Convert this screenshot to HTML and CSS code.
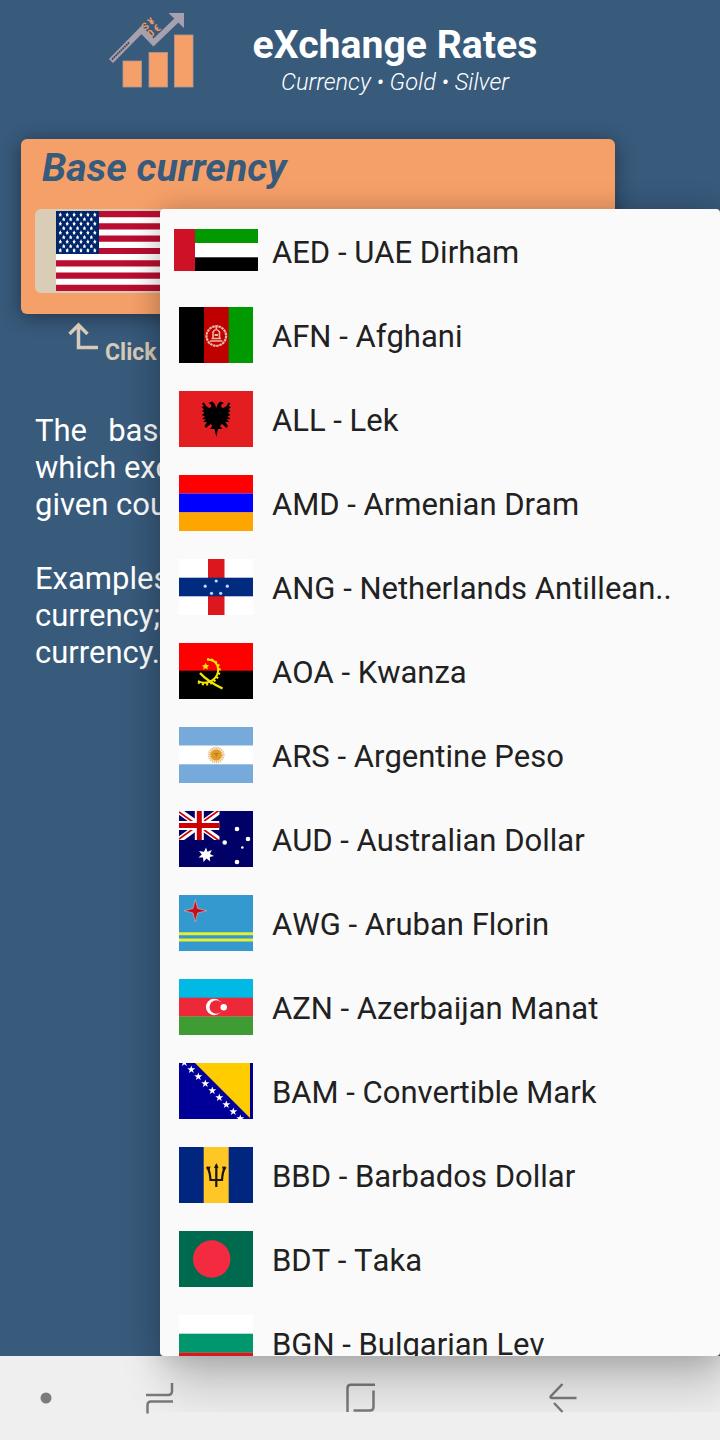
FILE: index.html
```
<!DOCTYPE html>
<html lang="en">
<head>
  <meta charset="UTF-8" />
  <meta name="viewport" content="width=device-width, initial-scale=1.0" />
  <title>eXchange Rates</title>
  <link rel="stylesheet" href="styles.css">
</head>
<body>

  <div class="app">
    <header class="header">
      <svg class="logo" viewBox="0 0 90 80">
        <g fill="#f6a069" stroke="#b49a91" stroke-width=".8">
          <rect x="15" y="51" width="18.5" height="26" />
          <rect x="41" y="42.5" width="18.5" height="34.5" />
          <rect x="66.5" y="25" width="18.5" height="52" />
        </g>
        <path d="M3 51 L33.5 20 L45.5 32.5 L71.5 7.5" fill="none" stroke="#a7a1af" stroke-width="5.8" />
        <path d="M60.5 3 H76 V18 Z" fill="#a7a1af" />
        <path d="M4 49.5 L21 32.5" stroke="#45404d" stroke-width="1.8" stroke-dasharray="1.8 .7" />
        <g class="logo-signs" transform="translate(40.5 18) rotate(-40)">
          <text x="-4.5" y="0">S</text>
          <text x="3.5" y="0">¥</text>
          <text x="-4.5" y="9">0</text>
          <text x="3.5" y="9">€</text>
        </g>
      </svg>
      <div class="titles">
        <h1>eXchange Rates</h1>
        <p>Currency • Gold • Silver</p>
      </div>
    </header>

    <section class="card">
      <h2>Base currency</h2>
      <div class="select">
        <svg class="usa" viewBox="0 0 152 80">
          <defs>
            <path id="us-star" d="M0 -2.3 L.8 -.7 L1.7 -.5 L1 .5 L1.1 2.1 L0 1.4 L-1.1 2.1 L-1 .5 L-1.7 -.5 L-.8 -.7 Z" />
            <g id="six">
              <use href="#us-star" x="4.3" /><use href="#us-star" x="11.2" /><use href="#us-star" x="18.1" />
              <use href="#us-star" x="25" /><use href="#us-star" x="31.9" /><use href="#us-star" x="38.8" />
            </g>
            <g id="five">
              <use href="#us-star" x="7.75" /><use href="#us-star" x="14.65" /><use href="#us-star" x="21.55" />
              <use href="#us-star" x="28.45" /><use href="#us-star" x="35.35" />
            </g>
          </defs>
          <rect width="152" height="80" fill="#fff" />
          <path d="M0 3.077H152M0 15.385H152M0 27.692H152M0 40H152M0 52.308H152M0 64.615H152M0 76.923H152" stroke="#b90d31" stroke-width="6.154" />
          <rect width="43" height="43" fill="#00266a" />
          <g fill="#fff">
            <use href="#six" y="3.6" /><use href="#five" y="8.2" />
            <use href="#six" y="12.6" /><use href="#five" y="17.2" />
            <use href="#six" y="21.6" /><use href="#five" y="26.2" />
            <use href="#six" y="30.6" /><use href="#five" y="35.2" />
            <use href="#six" y="39.3" />
          </g>
        </svg>
      </div>
    </section>

    <div class="hint">
      <svg viewBox="0 0 32 28"><path d="M30 25.5 H10.5 V3 M1.5 12 L10.5 3 L19.5 12" /></svg>
      <span>Click</span>
    </div>

    <div class="about">
      <p class="wide">The base</p>
      <p>which exchange</p>
      <p>given country</p>
      <p class="gap">Examples:</p>
      <p>currency;</p>
      <p>currency.</p>
    </div>

    <nav class="navbar">
      <svg class="dot" viewBox="0 0 12 12"><circle cx="6" cy="6" r="5.5" /></svg>
      <svg class="recents" viewBox="0 0 28 32"><path d="M26 1 V9 Q26 13 22 13 H0 M27 19.5 H5 Q1.5 19.5 1.5 23 V31.5" /></svg>
      <svg class="home" viewBox="0 0 30 30"><path d="M29 1.8 H5 Q1.5 1.8 1.5 5 V29 M27.5 7.5 V24 Q27.5 27.5 24 27.5 H7.5" /></svg>
      <svg class="back" viewBox="0 0 28 30"><path d="M27.5 15 H3 Q.8 15 2 13 L13.5 1 M5 20 L13.5 29" /></svg>
    </nav>
  </div>

  <div class="menu">
    <ul>
      <li>
        <svg class="uae" viewBox="0 0 84 42">
          <rect width="84" height="42" fill="#fff" />
          <rect width="84" height="14" fill="#009a00" />
          <rect y="28.3" width="84" height="13.7" />
          <rect width="21" height="42" fill="#ce1127" />
        </svg>
        <span>AED - UAE Dirham</span>
      </li>
      <li>
        <svg viewBox="0 0 74 56">
          <rect width="25" height="56" />
          <rect x="25" width="25" height="56" fill="#be0000" />
          <rect x="49.7" width="24.3" height="56" fill="#009900" />
          <g fill="none" stroke="#efb6a4">
            <circle cx="37.3" cy="29" r="9.8" stroke-width="2.2" stroke-dasharray="2.6 .6" />
            <path d="M31 34 H43.5 M32.5 31.5 H42 M34 31 V25 Q37.3 20 40.5 25 V31 M37.3 19 V23" stroke-width="1.6" />
            <path d="M35.5 28 H39" stroke-width="2" />
          </g>
        </svg>
        <span>AFN - Afghani</span>
      </li>
      <li>
        <svg viewBox="0 0 74 56">
          <rect width="74" height="56" fill="#e41e20" />
          <path d="M37.3 17 L35.5 12.5 L33 10.5 L29.5 12 L32 13.5 L32.5 16 L30 17 L27 15 L25 11.5 L22.8 12.5 L25 15 L22.5 16 L25 18.5 L23 20 L25.5 22 L22.8 24 L26 25.5 L23 28 L27 28.5 L24 31 L28 31 L25.5 35 L27 37 L31.5 33 L33.5 35 L31 38 L35.5 38 L37.3 46 L39 38 L43.5 38 L41 35 L43 33 L47.5 37 L49 35 L46.5 31 L50.5 31 L47.5 28.5 L51.5 28 L48.5 25.5 L51.5 24 L49 22 L51.5 20 L49.5 18.5 L52 16 L49.5 15 L51.5 12.5 L49.5 11.5 L47.5 15 L44.5 17 L42 16 L42.5 13.5 L45 12 L41.5 10.5 L39 12.5 Z" />
        </svg>
        <span>ALL - Lek</span>
      </li>
      <li>
        <svg viewBox="0 0 74 56">
          <rect width="74" height="18.5" fill="#f00" />
          <rect y="18.5" width="74" height="19" fill="#00f" />
          <rect y="37.3" width="74" height="18.7" fill="#ffa500" />
        </svg>
        <span>AMD - Armenian Dram</span>
      </li>
      <li>
        <svg viewBox="0 0 74 56">
          <rect width="74" height="56" fill="#fff" />
          <rect x="29" width="16.5" height="56" fill="#dc171d" />
          <rect y="18.7" width="74" height="18.6" fill="#002b7f" />
          <g fill="#c8d7f5">
            <circle cx="37.2" cy="22" r="1.6" /><circle cx="26.2" cy="27.2" r="1.6" /><circle cx="48.3" cy="27.2" r="1.6" />
            <circle cx="32.5" cy="34.3" r="1.6" /><circle cx="41.7" cy="34.3" r="1.6" />
          </g>
        </svg>
        <span>ANG - Netherlands Antillean..</span>
      </li>
      <li>
        <svg viewBox="0 0 74 56">
          <rect width="74" height="28" fill="#f00" />
          <rect y="27.7" width="74" height="28.3" />
          <g fill="none" stroke="#f4e800">
            <path d="M29 16.5 C38 17 41 25 38 32 C34 40 25 41.5 19 38" stroke-width="2" />
            <path d="M28 16.5 C39 15.5 43 26 39 33 C34 43 24 43 18 38.5" stroke-width="2.4" stroke-dasharray="2 2.2" />
            <path d="M21 30 Q28 38 43.5 45.5" stroke-width="2.4" />
          </g>
          <path d="M26.5 19.8 L27.7 22 L30.2 22.4 L28.3 24 L28.8 26.5 L26.5 25.3 L24.2 26.5 L24.6 24 L23 22.4 L25.5 22 Z" fill="#f4e800" />
        </svg>
        <span>AOA - Kwanza</span>
      </li>
      <li>
        <svg viewBox="0 0 74 56">
          <rect width="74" height="56" fill="#75aadb" />
          <rect y="18.5" width="74" height="18.8" fill="#fff" />
          <circle cx="37.2" cy="28" r="7" fill="none" stroke="#e5c187" stroke-width="2.8" stroke-dasharray="1.3 .7" />
          <circle cx="37.2" cy="28" r="5.8" fill="#df9c29" />
          <path d="M35 26.5 H39.5 M37.2 27 V30" stroke="#b57518" />
        </svg>
        <span>ARS - Argentine Peso</span>
      </li>
      <li>
        <svg viewBox="0 0 74 56">
          <rect width="74" height="56" fill="#006" />
          <svg width="40.5" height="29" viewBox="0 0 40.5 29">
            <path d="M0 0 L40.5 29 M40.5 0 L0 29" stroke="#fff" stroke-width="6" />
            <path d="M0 1 L40.5 30 M40.5 -1 L0 28" stroke="#c00" stroke-width="1.7" />
            <path d="M20.3 0 V29 M0 14.5 H40.5" stroke="#fff" stroke-width="9" />
            <path d="M20.3 0 V29 M0 14.5 H40.5" stroke="#c00" stroke-width="5" />
          </svg>
          <path d="M27 36.5 L28.5 40.7 L32.8 39 L31 43 L35 45 L30.8 46 L31.2 50.5 L27.5 47.5 L24.5 51 L24 46.5 L19.5 46.5 L22.8 43.5 L20 40 L25 40.7 Z" fill="#fff" />
          <g fill="#fff">
            <circle cx="58" cy="18" r="2.3" /><circle cx="69" cy="28" r="2.3" /><circle cx="45.7" cy="31.5" r="2.3" />
            <circle cx="58" cy="51" r="2.3" /><circle cx="63.3" cy="36.5" r="1.3" />
          </g>
        </svg>
        <span>AUD - Australian Dollar</span>
      </li>
      <li>
        <svg viewBox="0 0 74 56">
          <rect width="74" height="56" fill="#3499cf" />
          <path d="M16.3 4.5 L18.7 13.5 L28 15.7 L18.7 18 L16.3 27 L14 18 L5 15.7 L14 13.5 Z" fill="#c90d16" stroke="#c4a4b5" stroke-width=".8" />
          <path d="M0 38.8 H74 M0 45 H74" stroke="#e8ee32" stroke-width="3" />
        </svg>
        <span>AWG - Aruban Florin</span>
      </li>
      <li>
        <svg viewBox="0 0 74 56">
          <rect width="74" height="19" fill="#00b9e4" />
          <rect y="18.7" width="74" height="19" fill="#ed2939" />
          <rect y="37.5" width="74" height="18.5" fill="#3f9c35" />
          <circle cx="35.2" cy="28" r="8.3" fill="#fff" />
          <circle cx="37.3" cy="28" r="6.8" fill="#ed2939" />
          <circle cx="44.7" cy="28.2" r="3.2" fill="#fff" />
        </svg>
        <span>AZN - Azerbaijan Manat</span>
      </li>
      <li>
        <svg viewBox="0 0 74 56">
          <defs>
            <path id="star" d="M0 -4 L1 -1.2 H4 L1.6 .7 L2.5 3.5 L0 1.8 L-2.5 3.5 L-1.6 .7 L-4 -1.2 H-1 Z" />
          </defs>
          <rect width="74" height="56" fill="#009" />
          <path d="M16 0 H71 V55 Z" fill="#fc0" />
          <g fill="#fff">
            <use href="#star" x="5.3" y="-.5" /><use href="#star" x="12.3" y="6.5" /><use href="#star" x="19.3" y="13.5" />
            <use href="#star" x="26.3" y="20.5" /><use href="#star" x="33.3" y="27.5" /><use href="#star" x="40.3" y="34.5" />
            <use href="#star" x="47.3" y="41.5" /><use href="#star" x="54.3" y="48.5" /><use href="#star" x="61.3" y="55.5" />
          </g>
        </svg>
        <span>BAM - Convertible Mark</span>
      </li>
      <li>
        <svg viewBox="0 0 74 56">
          <rect width="74" height="56" fill="#00267f" />
          <rect x="24.7" width="25" height="56" fill="#ffc726" />
          <path d="M37.3 18 V40 M28 20 Q31 24 31.5 33 H43 Q43.5 24 46.5 20" fill="none" stroke="#1b1508" stroke-width="2.2" />
          <path d="M37.3 16 L39.5 21 H35 Z M27 20 L31.5 19.5 L30.5 23 Z M47.5 20 L43 19.5 L44 23 Z" fill="#1b1508" />
        </svg>
        <span>BBD - Barbados Dollar</span>
      </li>
      <li>
        <svg viewBox="0 0 74 56">
          <rect width="74" height="56" fill="#006a4e" />
          <circle cx="32.7" cy="28" r="18.7" fill="#f42a41" />
        </svg>
        <span>BDT - Taka</span>
      </li>
      <li>
        <svg viewBox="0 0 74 56">
          <rect width="74" height="19" fill="#fff" />
          <rect y="18.7" width="74" height="19" fill="#00966e" />
          <rect y="37.5" width="74" height="18.5" fill="#d01c1f" />
        </svg>
        <span>BGN - Bulgarian Lev</span>
      </li>
    </ul>
  </div>

</body>
</html>
```
FILE: styles.css
```
* {
  box-sizing: border-box;
  margin: 0;
  padding: 0;
}

body {
  position: relative;
  width: 720px;
  height: 1440px;
  overflow: hidden;
  font-family: Roboto, sans-serif;
}

svg {
  display: block;
  flex-shrink: 0;
}

.app {
  display: flex;
  flex-direction: column;
  height: 100%;
  background: #385a7b;
}

.header {
  display: flex;
  height: 139px;
  padding: 10px 0 0 108px;
}

.logo {
  width: 90px;
  height: 80px;
}

.logo-signs {
  font-size: 10px;
  font-weight: bold;
  fill: #ee9b6a;
}

.titles {
  width: 394px;
  color: #fff;
  text-align: center;
}

.header h1 {
  margin-top: 12px;
  font-size: 39.2px;
  line-height: 47px;
}

.header p {
  margin-top: -1px;
  font-size: 23.6px;
  font-weight: 300;
  font-style: italic;
  line-height: 28px;
}

.card {
  width: 594px;
  height: 175px;
  margin-left: 21px;
  padding: 6px 14px 0;
  border-radius: 6px;
  background: #f6a069;
  box-shadow: 0 3px 20px rgba(0, 0, 0, .42);
}

.card h2 {
  padding-left: 7px;
  color: #385a7b;
  font-size: 39.3px;
  font-style: italic;
  line-height: 46px;
}

.select {
  height: 84px;
  margin-top: 18px;
  padding: 2px 21px;
  border-radius: 6px;
  background: #dacdb7;
}

.usa {
  width: 152px;
  height: 80px;
}

.hint {
  display: flex;
  height: 98px;
  padding: 8px 0 0 68px;
  gap: 5px;
  color: #d6cab8;
  font-size: 23px;
  font-weight: bold;
}

.hint svg {
  width: 32px;
  height: 28px;
  fill: none;
  stroke: #d6cab8;
  stroke-width: 3.5;
}

.hint span {
  padding-top: 17px;
  line-height: 28px;
}

.about {
  flex: 1;
  padding-left: 35px;
  color: #fff;
  font-size: 31px;
  line-height: 37px;
  white-space: nowrap;
}

.about .wide {
  word-spacing: 13.5px;
}

.about .gap {
  margin-top: 37px;
}

.navbar {
  display: flex;
  align-items: center;
  height: 84px;
  padding-left: 40px;
  background: #efefef;
}

.navbar path {
  fill: none;
  stroke: #7b7b7b;
  stroke-width: 2.5;
}

.dot {
  width: 12px;
  height: 12px;
  fill: #7b7b7b;
}

.recents {
  width: 28px;
  height: 32px;
  margin-left: 94px;
}

.home {
  width: 30px;
  height: 30px;
  margin-left: 172px;
}

.back {
  width: 28px;
  height: 30px;
  margin-left: 173px;
}

/* dropdown over the page */
.menu {
  position: absolute;
  top: 209px;
  left: 160px;
  width: 560px;
  height: 1147px;
  border-radius: 4px;
  background: #fafafa;
  box-shadow: 8px 30px 48px rgba(0, 0, 0, .2), 0 0 30px rgba(0, 0, 0, .2);
  clip-path: inset(-60px 0 -56px -60px);
}

.menu ul {
  height: 100%;
  overflow: hidden;
  border-radius: 4px;
  list-style: none;
}

.menu li {
  display: flex;
  align-items: center;
  height: 84px;
  padding: 0 19px;
  gap: 19px;
  color: #212121;
  font-size: 31px;
  font-kerning: none;
  white-space: nowrap;
}

.menu li:first-child {
  padding-left: 14px;
  gap: 14px;
}

.menu li span {
  padding-top: 3px;
}

.menu li > svg {
  width: 74px;
  height: 56px;
}

.menu li > .uae {
  width: 84px;
  height: 42px;
  margin-top: -3px;
}
```
